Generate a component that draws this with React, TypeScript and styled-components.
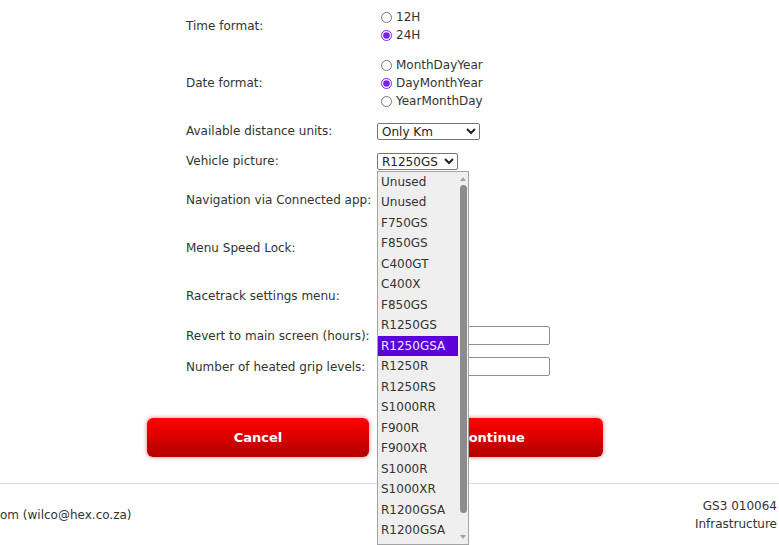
import React from 'react';
import styled, {createGlobalStyle} from 'styled-components';

const GlobalStyle = createGlobalStyle`
    html, body {
        margin: 0;
        padding: 0;
        background: #fff;
    }
    body {
        font-family: 'DejaVu Sans', sans-serif;
        font-size: 12px;
        color: #333;
    }
`;

const vehicles = [
    'Unused', 'Unused', 'F750GS', 'F850GS', 'C400GT', 'C400X', 'F850GS', 'R1250GS',
    'R1250GSA', 'R1250R', 'R1250RS', 'S1000RR', 'F900R', 'F900XR', 'S1000R', 'S1000XR',
    'R1200GSA', 'R1200GSA',
];

const Radio = ({name, label, checked}: {name: string; label?: string; checked?: boolean}) => (
    <RadioLine>
        <input type='radio' name={name} defaultChecked={checked} />
        {label && <span>{label}</span>}
    </RadioLine>
);

const App = () => {
    return (
        <Page>
            <GlobalStyle />
            <Form>
                <Row>
                    <Label>Time format:</Label>
                    <Value>
                        <Radio name='time' label='12H' />
                        <Radio name='time' label='24H' checked />
                    </Value>
                </Row>
                <Row>
                    <Label>Date format:</Label>
                    <Value>
                        <Radio name='date' label='MonthDayYear' />
                        <Radio name='date' label='DayMonthYear' checked />
                        <Radio name='date' label='YearMonthDay' />
                    </Value>
                </Row>
                <Row>
                    <Label>Available distance units:</Label>
                    <Value>
                        <Select $width={103} defaultValue='km'>
                            <option value='km'>Only Km</option>
                            <option value='mi'>Only Miles</option>
                        </Select>
                    </Value>
                </Row>
                <Row>
                    <Label>Vehicle picture:</Label>
                    <Value>
                        <SelectHolder>
                            <Select $width={81} defaultValue='R1250GS'>
                                <option value='R1250GS'>R1250GS</option>
                            </Select>
                            <Popup>
                                <Options>
                                    {vehicles.map((v, i) => (
                                        <Option key={i} $active={i === 8}>
                                            {v}
                                        </Option>
                                    ))}
                                </Options>
                                <Scrollbar>
                                    <Arrow $up />
                                    <Thumb />
                                    <Arrow />
                                </Scrollbar>
                            </Popup>
                        </SelectHolder>
                    </Value>
                </Row>
                {/* these radio groups sit under the open list */}
                <Row>
                    <Label>Navigation via Connected app:</Label>
                    <Value>
                        <Radio name='nav' checked />
                        <Radio name='nav' />
                    </Value>
                </Row>
                <Row>
                    <Label>Menu Speed Lock:</Label>
                    <Value>
                        <Radio name='lock' checked />
                        <Radio name='lock' />
                    </Value>
                </Row>
                <Row>
                    <Label>Racetrack settings menu:</Label>
                    <Value>
                        <Radio name='race' />
                        <Radio name='race' checked />
                    </Value>
                </Row>
                <Row>
                    <Label>Revert to main screen (hours):</Label>
                    <Value>
                        <TextInput type='text' defaultValue='' />
                    </Value>
                </Row>
                <Row>
                    <Label>Number of heated grip levels:</Label>
                    <Value>
                        <TextInput type='text' defaultValue='' />
                    </Value>
                </Row>
            </Form>
            <Buttons>
                <RedButton>Cancel</RedButton>
                <RedButton>Continue</RedButton>
            </Buttons>
            <Footer>
                <FooterLeft>om (wilco@hex.co.za)</FooterLeft>
                <FooterRight>
                    <div>GS3 010064</div>
                    <div>Infrastructure</div>
                </FooterRight>
            </Footer>
        </Page>
    );
};

const Page = styled.div`
    width: 779px;
    height: 545px;
    overflow: hidden;
    padding-top: 2px;
    box-sizing: border-box;
`;

const Form = styled.div`
    margin-left: 186px;
    display: flex;
    flex-direction: column;
`;

const Row = styled.div`
    display: grid;
    grid-template-columns: 191px 1fr;
    align-items: center;
    padding: 6px 0;
`;

const Label = styled.div`
    line-height: 18px;
    white-space: nowrap;
`;

const Value = styled.div`
    display: flex;
    flex-direction: column;
`;

const RadioLine = styled.label`
    display: flex;
    align-items: center;
    height: 18px;

    input {
        width: 11px;
        height: 11px;
        margin: 0 4px 0 4px;
        accent-color: #7a1ff2;
    }
`;

const Select = styled.select<{$width: number}>`
    width: ${p => p.$width}px;
    height: 17px;
    font-family: inherit;
    font-size: 12px;
    color: #222;
    padding: 0;
    border: 1px solid #767676;
    border-radius: 2px;
    background: #fff;
`;

const SelectHolder = styled.div`
    position: relative;
    width: 81px;
    height: 17px;
`;

const Popup = styled.div`
    position: absolute;
    top: 18px;
    left: 0;
    width: 92px;
    height: 374px;
    box-sizing: border-box;
    border: 1px solid #a3a3a3;
    background: #efefef;
    display: flex;
    overflow: hidden;
    z-index: 10;
`;

const Options = styled.div`
    flex: 1;
    display: flex;
    flex-direction: column;
`;

const Option = styled.div<{$active?: boolean}>`
    height: 20.5px;
    flex-shrink: 0;
    line-height: 20.5px;
    padding-left: 3px;
    white-space: nowrap;
    color: ${p => (p.$active ? '#f1eaff' : '#333')};
    background: ${p => (p.$active ? '#5b00d9' : 'transparent')};
`;

const Scrollbar = styled.div`
    width: 10px;
    display: flex;
    flex-direction: column;
    align-items: center;
    padding: 3px 0;
    box-sizing: border-box;
`;

const Arrow = styled.div<{$up?: boolean}>`
    width: 0;
    height: 0;
    border-left: 3.5px solid transparent;
    border-right: 3.5px solid transparent;
    ${p => (p.$up ? 'border-bottom: 4px solid #a3a3a3;' : 'border-top: 4px solid #a3a3a3;')}
    margin: 2px 0;
`;

const Thumb = styled.div`
    width: 7px;
    flex: 1;
    margin: 2px 0 20px;
    border-radius: 4px;
    background: #8c8c8c;
`;

const TextInput = styled.input`
    width: 173px;
    height: 19px;
    box-sizing: border-box;
    border: 1px solid #8f8f8f;
    border-radius: 2px;
    font-family: inherit;
    font-size: 12px;
    padding: 0 3px;
`;

const Buttons = styled.div`
    display: flex;
    gap: 12px;
    margin: 36px 0 0 147px;
`;

const RedButton = styled.button`
    width: 222px;
    height: 39px;
    border: none;
    border-radius: 6px;
    background: linear-gradient(to bottom, #ff0000 0%, #d60000 55%, #b00000 100%);
    box-shadow: 0 0 4px rgba(204, 0, 0, 0.55);
    color: #fff;
    font-family: inherit;
    font-weight: bold;
    font-size: 13px;
    cursor: pointer;
`;

const Footer = styled.div`
    margin-top: 26px;
    border-top: 1px solid #dcdcdc;
    display: flex;
    justify-content: space-between;
    align-items: center;
    padding: 13px 2px 0 0;
    line-height: 18px;
`;

const FooterLeft = styled.div`
    white-space: nowrap;
`;

const FooterRight = styled.div`
    text-align: right;
`;

export default App;
